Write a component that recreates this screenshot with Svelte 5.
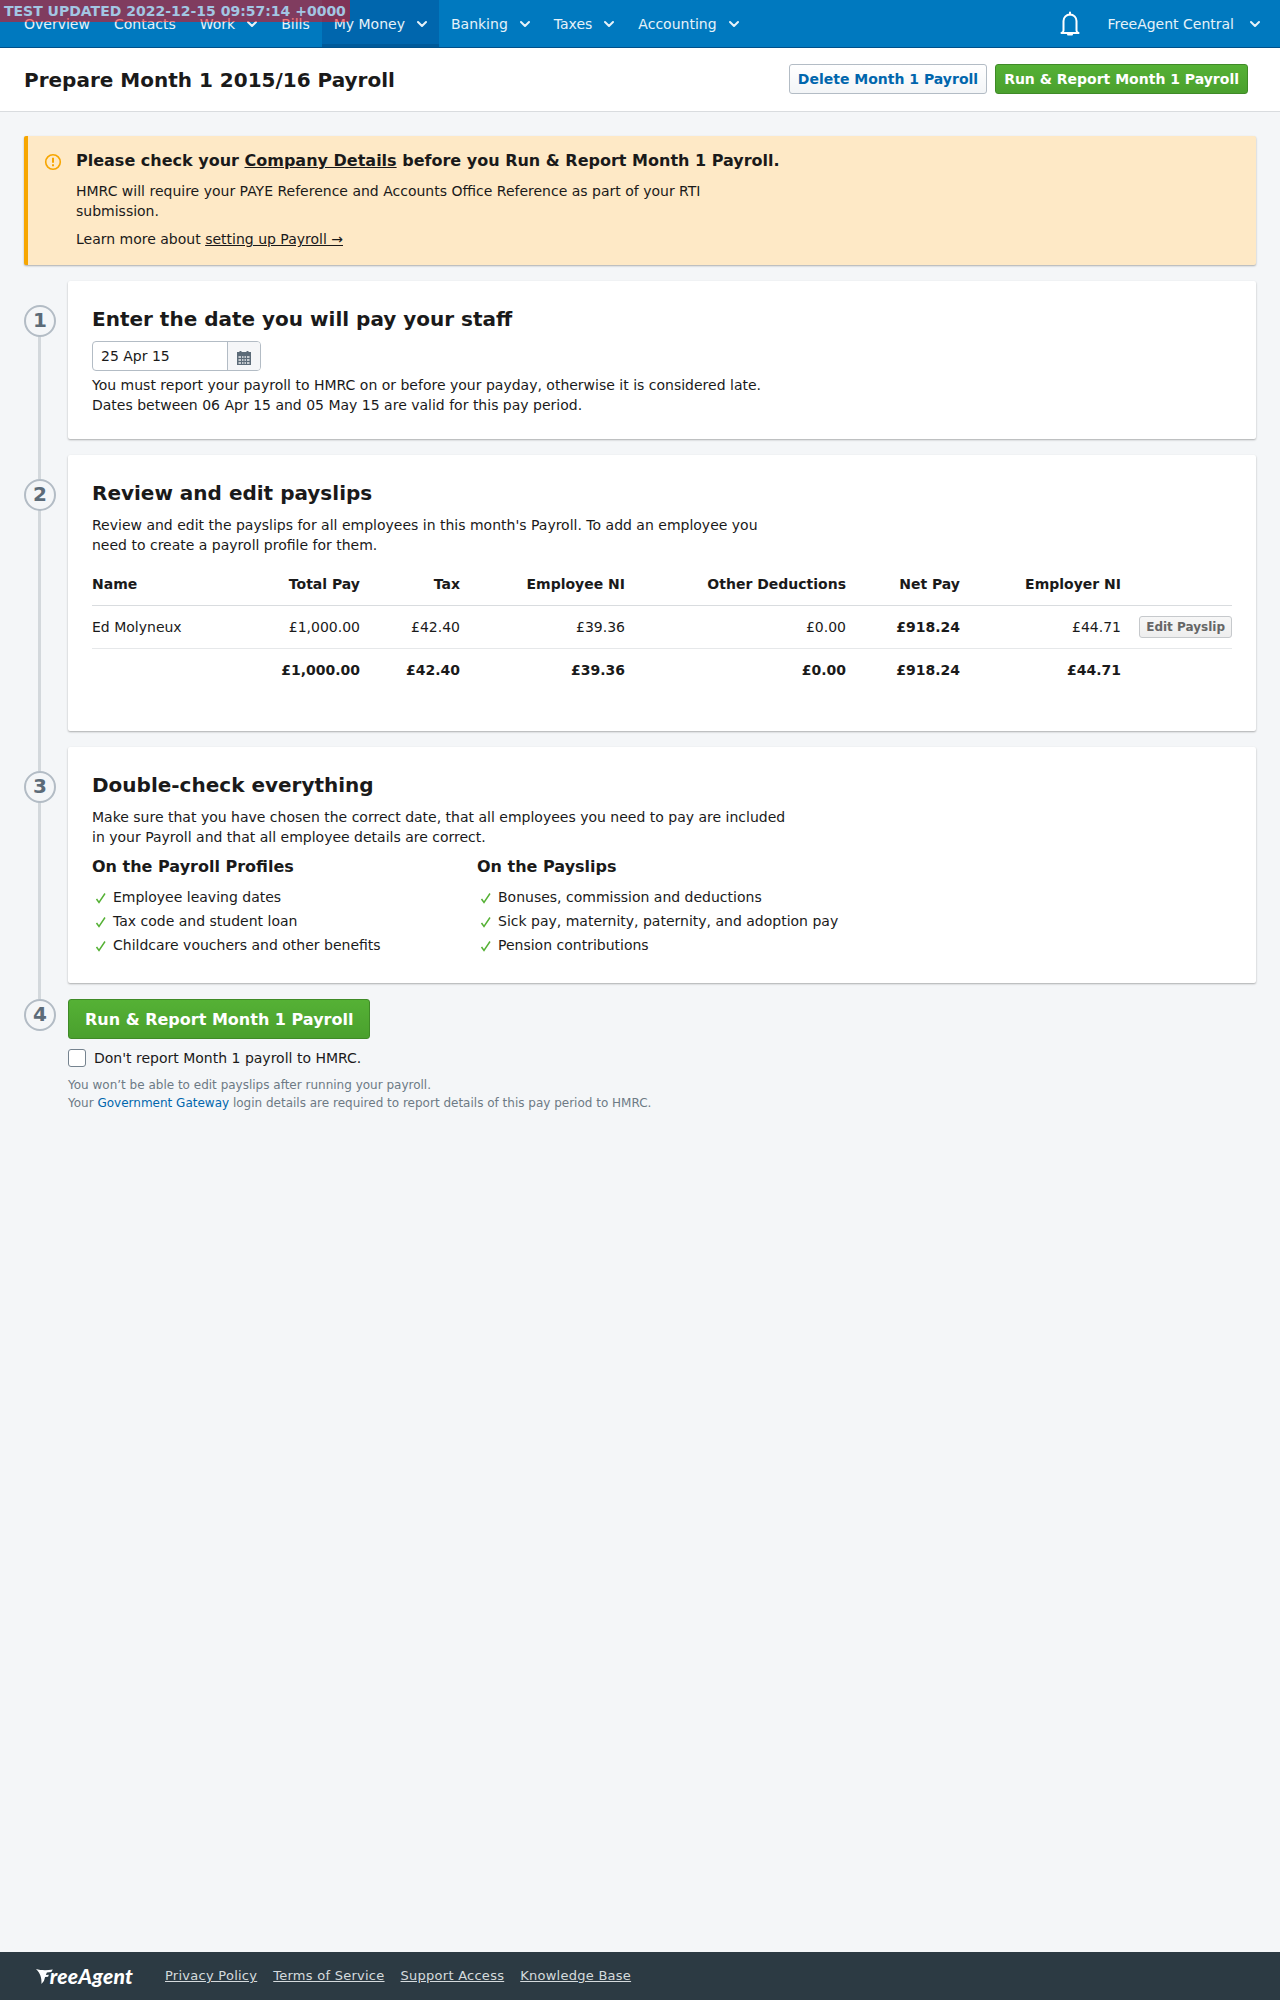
<script lang="ts">
  const navItems = [
    { label: 'Overview' },
    { label: 'Contacts' },
    { label: 'Work', menu: true },
    { label: 'Bills' },
    { label: 'My Money', menu: true, active: true },
    { label: 'Banking', menu: true },
    { label: 'Taxes', menu: true },
    { label: 'Accounting', menu: true }
  ];

  const profileChecks = ['Employee leaving dates', 'Tax code and student loan', 'Childcare vouchers and other benefits'];
  const payslipChecks = ['Bonuses, commission and deductions', 'Sick pay, maternity, paternity, and adoption pay', 'Pension contributions'];
  const footerLinks = ['Privacy Policy', 'Terms of Service', 'Support Access', 'Knowledge Base'];
</script>

{#snippet chevron()}
  <svg class="chevron" width="10" height="8" viewBox="0 0 10 8" fill="none" stroke="currentColor" stroke-width="2" stroke-linecap="round" stroke-linejoin="round" aria-hidden="true">
    <path d="M1 2l4 4 4-4"/>
  </svg>
{/snippet}

{#snippet checklist(title, items)}
  <div class="check-col">
    <h3>{title}</h3>
    <ul>
      {#each items as item}
        <li>
          <svg width="12" height="12" viewBox="0 0 12 12" fill="none" stroke="#55b135" stroke-width="1.5" aria-hidden="true">
            <path d="M1.500 7l2.500 3.500L10 1.500"/>
          </svg>
          {item}
        </li>
      {/each}
    </ul>
  </div>
{/snippet}

<div class="page">
  <div class="test-banner">TEST UPDATED 2022-12-15 09:57:14 +0000</div>

  <nav class="topnav">
    <div class="nav-items">
      {#each navItems as item}
        <span class="nav-item" class:nav-item--active={item.active}>
          {item.label}
          {#if item.menu}{@render chevron()}{/if}
        </span>
      {/each}
    </div>
    <div class="nav-right">
      <svg class="bell" width="24" height="26" viewBox="0 0 24 26" fill="none" stroke="#fff" stroke-width="2" stroke-linejoin="round" aria-hidden="true">
        <path d="M5.500 19.500V10a6.500 6.500 0 0 1 13 0v9.500c0 1 .8 2 2 2.500H3.500c1.200-.5 2-1.500 2-2.500z"/>
        <path d="M12 1.500v2M10 23.500h4" stroke-linecap="round"/>
      </svg>
      <span class="nav-item nav-item--account">FreeAgent Central {@render chevron()}</span>
    </div>
  </nav>

  <header class="page-head">
    <h1>Prepare Month 1 2015/16 Payroll</h1>
    <div class="head-actions">
      <button class="btn btn--plain">Delete Month 1 Payroll</button>
      <button class="btn btn--go">Run &amp; Report Month 1 Payroll</button>
    </div>
  </header>

  <main class="content">
    <section class="alert">
      <svg class="alert-icon" width="18" height="18" viewBox="0 0 18 18" fill="none" aria-hidden="true">
        <circle cx="9" cy="9" r="7.300" stroke="#f7a600" stroke-width="1.600"/>
        <path d="M9 4.800v5" stroke="#f7a600" stroke-width="2"/>
        <path d="M9 11.200v2" stroke="#f7a600" stroke-width="2"/>
      </svg>
      <div class="alert-body">
        <h2>Please check your <a href="#details">Company Details</a> before you Run &amp; Report Month 1 Payroll.</h2>
        <p>HMRC will require your PAYE Reference and Accounts Office Reference as part of your RTI submission.</p>
        <p class="alert-more">Learn more about <a href="#setup">setting up Payroll →</a></p>
      </div>
    </section>

    <div class="step">
      <div class="rail"><span class="line"></span><span class="num">1</span></div>
      <section class="card card--date">
        <h2>Enter the date you will pay your staff</h2>
        <div class="date-field">
          <span class="date-value">25 Apr 15</span>
          <span class="date-btn">
            <svg width="14" height="15" viewBox="0 0 14 15" aria-hidden="true">
              <path fill="#5c6b78" d="M0 2h2.500V1h2v1h5V1h2v1H14v13H0z"/>
              <path fill="#fff" opacity=".65" d="M1.500 6h2.500v2H1.500zM5 6h1.500v2H5zM7.500 6H9v2H7.500zM10 6h2.500v2H10zM1.500 9h2.500v2H1.500zM5 9h1.500v2H5zM7.500 9H9v2H7.500zM10 9h2.500v2H10zM1.500 12h2.500v2H1.500zM5 12h1.500v2H5zM7.500 12H9v2H7.500zM10 12h2.500v2H10z"/>
            </svg>
          </span>
        </div>
        <p class="date-help">You must report your payroll to HMRC on or before your payday, otherwise it is considered late.<br>Dates between 06 Apr 15 and 05 May 15 are valid for this pay period.</p>
      </section>
    </div>

    <div class="step">
      <div class="rail"><span class="line"></span><span class="num">2</span></div>
      <section class="card card--payslips">
        <h2>Review and edit payslips</h2>
        <p class="intro">Review and edit the payslips for all employees in this month's Payroll. To add an employee you need to create a payroll profile for them.</p>
        <table>
          <colgroup>
            <col style="width:120px"><col style="width:148px"><col style="width:100px"><col style="width:165px"><col style="width:221px"><col style="width:114px"><col style="width:161px"><col style="width:111px">
          </colgroup>
          <thead>
            <tr>
              <th class="left">Name</th><th>Total Pay</th><th>Tax</th><th>Employee NI</th><th>Other Deductions</th><th>Net Pay</th><th>Employer NI</th><th></th>
            </tr>
          </thead>
          <tbody>
            <tr>
              <td class="left">Ed Molyneux</td><td>£1,000.00</td><td>£42.40</td><td>£39.36</td><td>£0.00</td><td class="strong">£918.24</td><td>£44.71</td>
              <td><button class="edit">Edit Payslip</button></td>
            </tr>
          </tbody>
          <tfoot>
            <tr>
              <td></td><td>£1,000.00</td><td>£42.40</td><td>£39.36</td><td>£0.00</td><td>£918.24</td><td>£44.71</td><td></td>
            </tr>
          </tfoot>
        </table>
      </section>
    </div>

    <div class="step step--before-last">
      <div class="rail"><span class="line"></span><span class="num">3</span></div>
      <section class="card card--checks">
        <h2>Double-check everything</h2>
        <p class="intro">Make sure that you have chosen the correct date, that all employees you need to pay are included in your Payroll and that all employee details are correct.</p>
        <div class="check-cols">
          {@render checklist('On the Payroll Profiles', profileChecks)}
          {@render checklist('On the Payslips', payslipChecks)}
        </div>
      </section>
    </div>

    <div class="step step--last">
      <div class="rail"><span class="num">4</span></div>
      <div class="finish">
        <button class="btn btn--go btn--large">Run &amp; Report Month 1 Payroll</button>
        <label class="dont-report"><span class="checkbox"></span>Don't report Month 1 payroll to HMRC.</label>
        <p class="fine">You won’t be able to edit payslips after running your payroll.<br>Your <a href="#gateway">Government Gateway</a> login details are required to report details of this pay period to HMRC.</p>
      </div>
    </div>
  </main>

  <footer class="footer">
    <span class="logo">
      <svg width="17" height="15" viewBox="0 0 17 15" fill="#fff" aria-hidden="true"><path d="M0 0c5 1.500 11 1.500 17 .5L15.500 3 11 3.500l-1 2.500 3-.2-.8 2-3 .2L8 12l-2.500 3C6 9 4 3.500 0 0z"/></svg>
      <span class="logo-text">reeAgent</span>
    </span>
    {#each footerLinks as link}
      <a href="#footer">{link}</a>
    {/each}
  </footer>
</div>

<style>
  :global(body) {
    margin: 0;
    background: #f4f6f8;
  }

  .page {
    position: relative;
    display: flex;
    flex-direction: column;
    min-height: 2000px;
    font-family: "DejaVu Sans", sans-serif;
    font-size: 14px;
    line-height: 20px;
    color: #1a1a1a;
  }

  .test-banner {
    position: absolute;
    top: 0;
    left: 0;
    z-index: 5;
    width: 346px;
    height: 22px;
    padding-left: 4px;
    background: rgba(255, 0, 0, 0.5);
    border-radius: 0 0 3px 0;
    color: #a3c6e3;
    font-weight: 700;
    font-size: 14px;
    line-height: 22px;
    white-space: nowrap;
  }

  .topnav {
    display: flex;
    justify-content: space-between;
    height: 47px;
    background: #0079bf;
    border-bottom: 1px solid #00508a;
    color: #fff;
  }

  .nav-items {
    display: flex;
    padding-left: 12px;
  }

  .nav-right {
    display: flex;
    align-items: center;
    padding-right: 8px;
  }

  .nav-item {
    display: flex;
    align-items: center;
    gap: 12px;
    padding: 1px 12px 0;
    height: 47px;
    box-sizing: border-box;
    color: #e6f2f9;
    white-space: nowrap;
  }

  .nav-item--active {
    background: #0066ad;
    box-shadow: inset 0 -3px 0 #005a9a;
  }

  .nav-item--account {
    margin-left: 13px;
    gap: 16px;
  }

  .chevron { flex-shrink: 0; }

  .page-head {
    display: flex;
    align-items: center;
    justify-content: space-between;
    height: 63px;
    padding: 0 32px 0 24px;
    background: #fff;
    border-bottom: 1px solid #d9dcdf;
  }

  h1 {
    margin: 0;
    font-size: 20px;
    line-height: 28px;
    font-weight: 700;
  }

  .head-actions {
    display: flex;
    gap: 8px;
    margin-top: -1px;
  }

  .btn {
    box-sizing: border-box;
    height: 30px;
    padding: 0 8px;
    border-radius: 3px;
    font-family: inherit;
    font-size: 14px;
    font-weight: 700;
    white-space: nowrap;
  }

  .btn--plain {
    background: linear-gradient(#ffffff, #f3f5f7);
    border: 1px solid #b3bcc5;
    color: #0066ad;
  }

  .btn--go {
    background: linear-gradient(#55b135, #4aa02e);
    border: 1px solid #3f8a27;
    color: #fff;
  }

  .btn--large {
    height: 40px;
    padding: 0 16px;
    font-size: 16px;
  }

  .content {
    flex: 1;
    padding: 24px 24px 0;
  }

  .alert {
    display: flex;
    gap: 14px;
    box-sizing: border-box;
    height: 129px;
    padding: 15px 16px;
    background: #fee9c6;
    border-left: 4px solid #f7a600;
    border-radius: 2px;
    box-shadow: 0 1px 2px rgba(0, 0, 0, 0.3);
    margin-bottom: 16px;
  }

  .alert-icon { margin-top: 2px; flex-shrink: 0; }

  .alert h2 {
    margin: 0;
    font-size: 16px;
    line-height: 20px;
    font-weight: 700;
  }

  .alert p {
    margin: 10px 0 0;
    max-width: 700px;
  }

  .alert .alert-more { margin-top: 8px; }

  .alert a { color: inherit; }

  .step {
    display: flex;
    gap: 12px;
    padding-bottom: 16px;
  }

  .step--last { padding-bottom: 0; }

  .rail {
    position: relative;
    display: flex;
    flex-direction: column;
    align-items: center;
    width: 32px;
    flex-shrink: 0;
  }

  .num {
    position: relative;
    box-sizing: border-box;
    width: 32px;
    height: 32px;
    margin-top: 24px;
    flex-shrink: 0;
    border: 2px solid #b3bcc5;
    border-radius: 50%;
    background: #f4f6f8;
    color: #5c6b78;
    font-size: 20px;
    font-weight: 700;
    line-height: 27px;
    text-align: center;
  }

  .step--last .num { margin-top: 0; }

  /* runs behind the circle down to the next step's circle */
  .line {
    position: absolute;
    top: 40px;
    bottom: -40px;
    left: 14px;
    width: 3px;
    background: #d3d8dc;
  }

  .step--before-last .line { bottom: -16px; }

  .card {
    flex: 1;
    min-width: 0;
    box-sizing: border-box;
    padding: 24px;
    background: #fff;
    border-radius: 2px;
    box-shadow: 0 1px 2px rgba(0, 0, 0, 0.3);
  }

  .card--date { height: 158px; }
  .card--payslips { height: 276px; }
  .card--checks { height: 236px; }

  .card h2 {
    margin: 0;
    font-size: 20px;
    line-height: 28px;
    font-weight: 700;
  }

  .card p {
    margin: 0;
    max-width: 700px;
  }

  .card .intro { margin-top: 8px; }

  .card .date-help { margin-top: 4px; }

  .date-field {
    display: flex;
    box-sizing: border-box;
    width: 169px;
    height: 30px;
    margin-top: 8px;
    border: 1px solid #b3bcc5;
    border-radius: 4px;
    overflow: hidden;
  }

  .date-value {
    flex: 1;
    padding-left: 8px;
    line-height: 28px;
  }

  .date-btn {
    display: flex;
    align-items: center;
    justify-content: center;
    width: 33px;
    padding-top: 2px;
    box-sizing: border-box;
    background: #f5f6f8;
    border-left: 1px solid #b3bcc5;
  }

  table {
    width: 1140px;
    margin-top: 8px;
    table-layout: fixed;
    border-collapse: collapse;
  }

  th, td {
    padding: 0;
    text-align: right;
    white-space: nowrap;
  }

  th {
    height: 42px;
    border-bottom: 1px solid #d9dcdf;
    font-weight: 700;
  }

  tbody td {
    height: 42px;
    border-bottom: 1px solid #e6e8ea;
  }

  tfoot td {
    height: 42px;
    font-weight: 700;
  }

  .left { text-align: left; }
  .strong { font-weight: 700; }

  .edit {
    box-sizing: border-box;
    height: 22px;
    padding: 0 6px;
    background: linear-gradient(#f7f7f7, #eeeeee);
    border: 1px solid #c6c9cc;
    border-radius: 3px;
    color: #666;
    font-family: inherit;
    font-size: 12px;
    font-weight: 700;
  }

  .check-cols {
    display: flex;
    margin-top: 10px;
  }

  .check-col { width: 386px; }

  .check-col:first-child { width: 385px; }

  h3 {
    margin: 0;
    font-size: 16px;
    line-height: 20px;
    font-weight: 700;
  }

  ul {
    margin: 8px 0 0;
    padding: 0;
    list-style: none;
  }

  li {
    display: flex;
    align-items: center;
    gap: 6px;
    height: 24px;
    padding-left: 3px;
  }

  li svg { margin-top: 2px; flex-shrink: 0; }

  .finish { flex: 1; min-width: 0; }

  .dont-report {
    display: flex;
    align-items: center;
    gap: 8px;
    margin-top: 9px;
  }

  .checkbox {
    box-sizing: border-box;
    width: 18px;
    height: 18px;
    border: 1px solid #75838f;
    border-radius: 3px;
    background: #fff;
  }

  .fine {
    margin: 8px 0 0;
    font-size: 12px;
    line-height: 18px;
    color: #6d7a85;
  }

  .fine a {
    color: #0066ad;
    text-decoration: none;
  }

  .footer {
    display: flex;
    align-items: center;
    gap: 16px;
    box-sizing: border-box;
    height: 48px;
    padding-left: 36px;
    background: #2c3a43;
  }

  .footer a {
    color: #d5dadd;
    font-size: 13px;
    letter-spacing: 0.02em;
    white-space: nowrap;
  }

  .logo {
    display: flex;
    align-items: center;
    width: 97px;
    margin-right: 16px;
    color: #fff;
  }

  .logo-text {
    font-family: Lato, sans-serif;
    font-style: italic;
    font-weight: 900;
    font-size: 21px;
    letter-spacing: 0.2px;
    margin-left: -3px;
    white-space: nowrap;
  }
</style>
